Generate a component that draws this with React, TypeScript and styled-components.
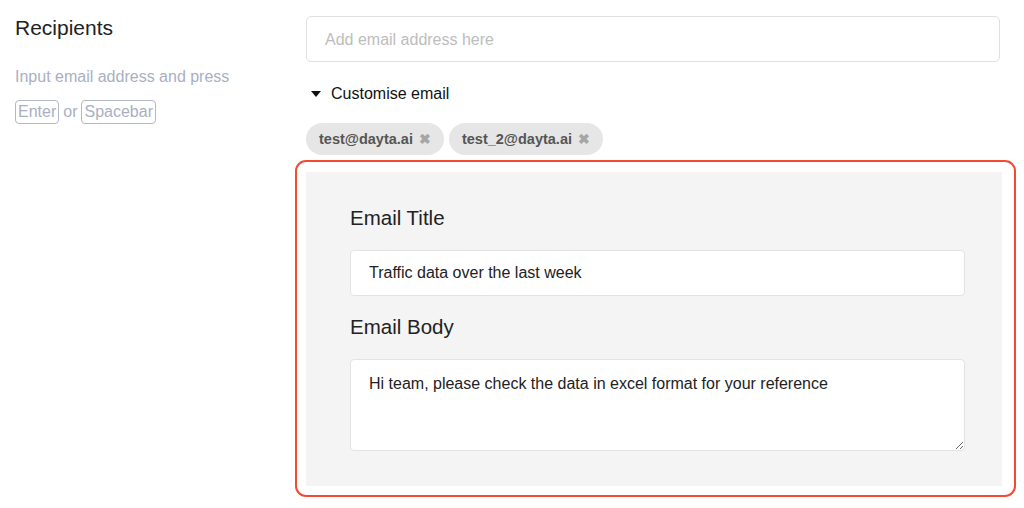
import styled, { createGlobalStyle } from 'styled-components';

const GlobalStyle = createGlobalStyle`
  body {
    margin: 0;
    background: #fff;
    font-family: "Liberation Sans", Arial, sans-serif;
    color: #222;
  }
  * { box-sizing: border-box; }
`;

const Page = styled.div`
  display: flex;
  width: 1024px;
  height: 508px;
  overflow: hidden;
`;

const Sidebar = styled.div`
  width: 306px;
  flex-shrink: 0;
  padding: 15px 0 0 15px;
`;

const Heading = styled.h2`
  margin: 0;
  font-size: 21px;
  font-weight: 400;
  line-height: 26px;
  color: #222;
`;

const Hint = styled.p`
  margin: 26px 0 0;
  font-size: 16px;
  line-height: 20px;
  color: #a9afc2;
`;

const KeyRow = styled.div`
  display: flex;
  align-items: center;
  gap: 4px;
  margin-top: 13px;
  font-size: 16px;
  color: #a9afc2;
`;

const Key = styled.kbd`
  font-family: inherit;
  font-size: 16px;
  line-height: 22px;
  height: 24px;
  padding: 0 2px;
  border: 1px solid #b3b8c6;
  border-radius: 4px;
  color: #a9afc2;
`;

const Main = styled.div`
  width: 696px;
  padding-top: 16px;
  display: flex;
  flex-direction: column;
`;

const EmailInput = styled.input`
  width: 694px;
  height: 46px;
  border: 1px solid #e0e0e0;
  border-radius: 5px;
  padding: 2px 18px 0;
  font-family: inherit;
  font-size: 16px;
  color: #222;
  outline: none;
  &::placeholder { color: #bdbdbd; }
`;

const Toggle = styled.div`
  display: flex;
  align-items: center;
  gap: 10px;
  margin-top: 21px;
  padding-left: 5px;
  font-size: 16px;
  line-height: 22px;
  color: #111;
`;

const Caret = styled.span`
  width: 0;
  height: 0;
  border-left: 5px solid transparent;
  border-right: 5px solid transparent;
  border-top: 6px solid #111;
`;

const Chips = styled.div`
  display: flex;
  gap: 5px;
  margin-top: 18px;
`;

const Chip = styled.span`
  display: inline-flex;
  align-items: center;
  gap: 6px;
  height: 32px;
  padding: 0 13px 0 13px;
  border-radius: 16px;
  background: #e6e6e6;
  font-size: 14.5px;
  font-weight: 700;
  color: #555;
`;

const ChipClose = styled.span`
  font-size: 14px;
  color: #a6a6a6;
`;

const Panel = styled.div`
  position: relative;
  margin-top: 17px;
  width: 696px;
  background: #f4f4f4;
  padding: 35px 37px 35px 44px;

  &::after {
    content: '';
    position: absolute;
    left: -11px;
    top: -12px;
    right: -14px;
    bottom: -11px;
    border: 2px solid #f44a32;
    border-radius: 11px;
    pointer-events: none;
  }
`;

const FieldLabel = styled.label`
  display: block;
  font-size: 20.5px;
  line-height: 22px;
  color: #222;
  margin-bottom: 21px;
  & + * + & { margin-top: 20px; }
`;

const FieldInput = styled.input`
  display: block;
  width: 100%;
  height: 46px;
  border: 1px solid #e3e3e3;
  border-radius: 4px;
  background: #fff;
  padding: 0 18px;
  font-family: inherit;
  font-size: 16px;
  color: #222;
  outline: none;
`;

const FieldArea = styled.textarea`
  display: block;
  width: 100%;
  height: 92px;
  border: 1px solid #e3e3e3;
  border-radius: 4px;
  background: #fff;
  padding: 14px 18px;
  font-family: inherit;
  font-size: 16px;
  line-height: 20px;
  color: #222;
  outline: none;
`;

const recipients = ['test@dayta.ai', 'test_2@dayta.ai'];

export default function App() {
  return (
    <Page>
      <GlobalStyle />
      <Sidebar>
        <Heading>Recipients</Heading>
        <Hint>Input email address and press</Hint>
        <KeyRow>
          <Key>Enter</Key>
          <span>or</span>
          <Key>Spacebar</Key>
        </KeyRow>
      </Sidebar>
      <Main>
        <EmailInput placeholder="Add email address here" />
        <Toggle>
          <Caret />
          <span>Customise email</span>
        </Toggle>
        <Chips>
          {recipients.map((r) => (
            <Chip key={r}>
              {r}
              <ChipClose>✖</ChipClose>
            </Chip>
          ))}
        </Chips>
        <Panel>
          <FieldLabel>Email Title</FieldLabel>
          <FieldInput defaultValue="Traffic data over the last week" />
          <FieldLabel>Email Body</FieldLabel>
          <FieldArea defaultValue="Hi team, please check the data in excel format for your reference" />
        </Panel>
      </Main>
    </Page>
  );
}
